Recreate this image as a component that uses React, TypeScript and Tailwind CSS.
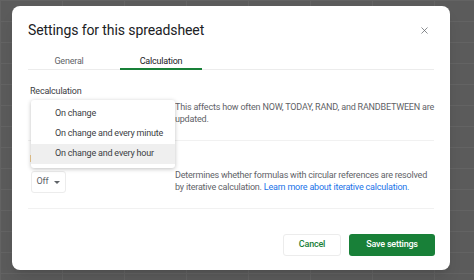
import React from 'react';
import { X } from 'lucide-react';

const MENU = ['On change', 'On change and every minute', 'On change and every hour'];

export default function App() {
  return (
    <div
      className="w-[474px] h-[280px] overflow-hidden bg-[#5b5b5b] pt-[6px] pl-[12px] bg-[linear-gradient(to_right,#636363_1px,transparent_1px),linear-gradient(to_bottom,#636363_1px,transparent_1px)] bg-[size:62px_21px]"
      style={{ fontFamily: 'Roboto, "Liberation Sans", sans-serif' }}
    >
      {/* Dialog */}
      <div className="relative w-[438px] h-[264px] bg-white rounded-[8px] shadow-lg flex flex-col text-[9px] tracking-[-0.2px]">
        {/* Header */}
        <div className="flex justify-between items-center pl-[16px] pr-[20px] pt-[14px]">
          <h1 className="text-[14px] leading-[20px] tracking-[-0.1px] text-[#202124]">Settings for this spreadsheet</h1>
          <X className="w-[11px] h-[11px] text-[#5f6368]" strokeWidth={1.6} />
        </div>

        {/* Tabs */}
        <div className="mx-[16px] mt-[15px] flex gap-[10px] border-b border-[#ececec]">
          <div className="w-[82px] text-center leading-[12px] text-[#5f6368] pb-[2px]">General</div>
          <div className="w-[82px] text-center leading-[12px] text-[#202124] pb-[1px] border-b-[2px] border-[#188038] -mb-px">
            Calculation
          </div>
        </div>

        {/* Recalculation */}
        <div className="mx-[16px] pt-[15px] pb-[15px] border-b border-[#f1f1f1] relative">
          <div className="leading-[12px] text-[#3c4043] pl-[2px]">Recalculation</div>
          <div className="flex mt-[4px]">
            <div className="w-[147px] shrink-0" />
            <div className="leading-[12px] text-[#5f6368] whitespace-nowrap">
              This affects how often NOW, TODAY, RAND, and RANDBETWEEN are
              <br />
              updated.
            </div>
          </div>

          {/* Dropdown menu (open) */}
          <div className="absolute left-[3px] top-[30px] w-[144px] bg-white rounded-[3px] shadow-[0_1px_4px_rgba(0,0,0,0.25)] py-[4px] z-10">
            {MENU.map((m, i) => (
              <div
                key={m}
                className={
                  'pl-[24px] h-[20px] flex items-center text-[#3c4043] ' +
                  (i === 2 ? 'bg-[#efefef]' : '')
                }
              >
                {m}
              </div>
            ))}
          </div>
        </div>

        {/* Iterative calculation */}
        <div className="mx-[16px] pt-[12px] pb-[15px] border-b border-[#f1f1f1]">
          <div className="leading-[12px] text-[#3c4043] pl-[2px]">Iterative calculation</div>
          <div className="flex mt-[6px]">
            <div className="w-[147px] shrink-0 pl-[3px]">
              <div className="w-[35px] h-[22px] border border-[#ececec] rounded-[3px] flex items-center justify-center gap-[6px] text-[#5f6368]">
                Off
                <span className="w-0 h-0 border-l-[3px] border-r-[3px] border-t-[3px] border-l-transparent border-r-transparent border-t-[#5f6368]" />
              </div>
            </div>
            <div className="leading-[12px] text-[#5f6368] -mt-[2px] whitespace-nowrap">
              Determines whether formulas with circular references are resolved
              <br />
              by iterative calculation. <span className="text-[#1a73e8]">Learn more about iterative calculation.</span>
            </div>
          </div>
        </div>

        {/* Footer */}
        <div className="flex justify-end gap-[8px] pr-[15px] mt-[25px]">
          <button className="w-[58px] h-[22px] rounded-[3px] border border-[#ececec] font-medium text-[#188038] bg-white">
            Cancel
          </button>
          <button className="w-[86px] h-[22px] rounded-[3px] font-medium text-white bg-[#188038]">
            Save settings
          </button>
        </div>
      </div>
    </div>
  );
}
